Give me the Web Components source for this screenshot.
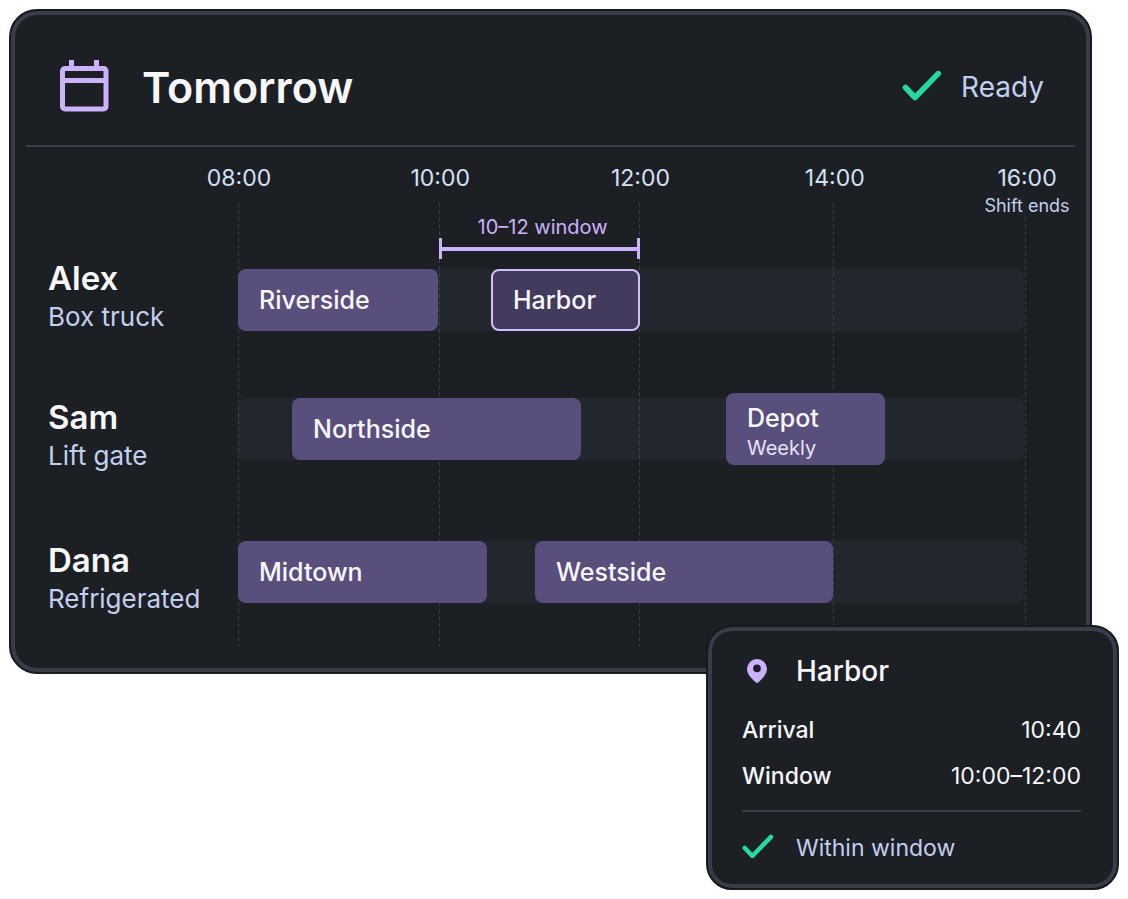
<!DOCTYPE html>
<html lang="en">
<head>
<meta charset="utf-8">
<title>Tomorrow – dispatch schedule</title>
<style>
  :root {
    --surface: #1c2025;
    --edge: #393d47;
    --rim: #171a21;
    --rule: #3b3f4a;
    --text: #f7f7fa;
    --muted: #c3cfee;
    --lilac: #cbb2fb;
    --green: #26d9a0;
    --block: #594f7d;
    --block-soft: #423b5e;
    --hours: 201fr 200fr 194fr 192fr;
  }
  body {
    margin: 0;
    background: #fff;
    color: var(--text);
    font-family: Inter, "Liberation Sans", sans-serif;
  }
</style>
</head>
<body>
<dispatch-page>
  <schedule-board heading="Tomorrow" status="Ready">
    <time-mark slot="axis" time="08:00"></time-mark>
    <time-mark slot="axis" time="10:00"></time-mark>
    <time-mark slot="axis" time="12:00"></time-mark>
    <time-mark slot="axis" time="14:00"></time-mark>
    <time-mark slot="axis" time="16:00" note="Shift ends"></time-mark>

    <driver-row name="Alex" vehicle="Box truck" class="windowed" style="--slots: 200fr 53fr 149fr 384fr">
      <time-window slot="window">10–12 window</time-window>
      <job-block style="grid-column: 1">Riverside</job-block>
      <job-block style="grid-column: 3" selected>Harbor</job-block>
    </driver-row>
    <driver-row name="Sam" vehicle="Lift gate" style="--slots: 54fr 289fr 145fr 159fr 139fr">
      <job-block style="grid-column: 2">Northside</job-block>
      <job-block style="grid-column: 4" note="Weekly">Depot</job-block>
    </driver-row>
    <driver-row name="Dana" vehicle="Refrigerated" style="--slots: 249fr 48fr 298fr 191fr">
      <job-block style="grid-column: 1">Midtown</job-block>
      <job-block style="grid-column: 3">Westside</job-block>
    </driver-row>
  </schedule-board>

  <stop-card slot="detail" heading="Harbor" status="Within window">
    <detail-line label="Arrival">10:40</detail-line>
    <detail-line label="Window">10:00–12:00</detail-line>
  </stop-card>
</dispatch-page>

<script>
const define = (name, render) => customElements.define(name, class extends HTMLElement {
  connectedCallback() {
    if (this.shadowRoot) return;
    this.attachShadow({ mode: "open" }).innerHTML = render(key => this.getAttribute(key) || "");
  }
});

define("dispatch-page", () => `
  <style>
    :host { display: flex; flex-direction: column; padding: 9px; }
    ::slotted(schedule-board) { margin-right: 27px; }
    ::slotted(stop-card) { align-self: flex-end; position: relative; margin-top: -49px; }
  </style>
  <slot></slot>
  <slot name="detail"></slot>`);

define("check-icon", () => `
  <style>
    :host { display: block; flex: none; }
    svg { display: block; width: 100%; height: auto; }
  </style>
  <svg viewBox="0 0 40 34" fill="none" stroke="var(--green)" stroke-width="5.6" stroke-linecap="round" stroke-linejoin="round" aria-hidden="true">
    <path d="M3.5 17.5 13 27.500 36.200 3.600"/>
  </svg>`);

define("schedule-board", at => `
  <style>
    :host {
      display: block;
      box-sizing: border-box;
      padding: 6px 15px 26px;
      border-radius: 28px;
      border: 2px solid var(--rim);
      background: var(--surface);
      box-shadow: inset 0 0 0 4px var(--edge);
    }
    header {
      display: flex;
      align-items: center;
      box-sizing: border-box;
      height: 130px;
      padding: 12px 31px 0 34px;
      border-bottom: 2px solid var(--rule);
    }
    .calendar { flex: none; width: 50px; height: 54px; margin-right: 32px; }
    h1 { margin: 0; flex: 1; font-size: 43px; line-height: 56px; font-weight: 600; }
    check-icon { width: 40px; margin-right: 19px; }
    .status { font-size: 28px; line-height: 36px; color: var(--muted); }
    .chart { position: relative; display: flex; flex-direction: column; }
    .axis { display: grid; grid-template-columns: var(--hours) 0; margin: 17px 49px 0 212px; height: 52px; }
    .lines {
      position: absolute;
      inset: 56px 49px 0 212px;
      display: grid;
      grid-template-columns: var(--hours) 1px;
    }
    .lines i {
      width: 1px;
      background: repeating-linear-gradient(#3a3e48 0 4px, transparent 4px 7px);
    }
    .lines i:last-child { margin-top: 14px; }
    .rows { position: relative; display: grid; gap: 65px; padding: 0 51px 27px 22px; }
  </style>
  <header>
    <svg class="calendar" viewBox="0 0 50 54" fill="none" stroke="var(--lilac)" stroke-width="5" aria-hidden="true">
      <rect x="2.500" y="8.500" width="43.500" height="40.500" rx="2.500"/>
      <path d="M2.500 20.500H46M11.500 8V0M36.500 8V0"/>
    </svg>
    <h1>${at("heading")}</h1>
    <check-icon></check-icon>
    <span class="status">${at("status")}</span>
  </header>
  <div class="chart">
    <div class="lines" aria-hidden="true"><i></i><i></i><i></i><i></i><i></i></div>
    <div class="axis"><slot name="axis"></slot></div>
    <div class="rows"><slot></slot></div>
  </div>`);

define("time-mark", at => `
  <style>
    :host { display: flex; flex-direction: column; align-items: center; width: 2px; white-space: nowrap; color: #d6e0f5; }
    time { font-size: 23px; line-height: 28px; }
    small { font-size: 18px; line-height: 28px; color: var(--muted); }
  </style>
  <time>${at("time")}</time>
  ${at("note") && `<small>${at("note")}</small>`}`);

define("driver-row", at => `
  <style>
    :host { display: grid; grid-template-columns: 190px minmax(0, 1fr); align-items: start; }
    :host(.windowed) { align-items: end; margin-bottom: -4px; }
    :host(.windowed) .lane { padding-bottom: 6px; }
    h2, p { margin: 0; white-space: nowrap; }
    h2 { font-size: 33px; line-height: 38px; font-weight: 600; }
    p { font-size: 26px; line-height: 40px; color: var(--muted); }
    .track {
      display: grid;
      grid-template: 62px / var(--slots);
      align-items: center;
      border-radius: 8px;
      background: #6c749815;
    }
  </style>
  <div><h2>${at("name")}</h2><p>${at("vehicle")}</p></div>
  <div class="lane">
    <slot name="window"></slot>
    <div class="track"><slot></slot></div>
  </div>`);

define("time-window", () => `
  <style>
    :host { display: grid; grid-template-columns: var(--hours); margin-bottom: 10px; }
    div { grid-column: 2; display: grid; justify-items: center; color: var(--lilac); font-size: 20px; line-height: 22px; margin-right: -2px; }
    span { padding-left: 6px; white-space: nowrap; }
    i {
      justify-self: stretch;
      height: 21px;
      box-sizing: border-box;
      border: solid var(--lilac);
      border-width: 0 3px;
      background: linear-gradient(var(--lilac), var(--lilac)) center / 100% 4px no-repeat;
    }
  </style>
  <div><span><slot></slot></span><i></i></div>`);

define("job-block", at => `
  <style>
    :host {
      display: flex;
      flex-direction: column;
      justify-content: center;
      box-sizing: border-box;
      height: 62px;
      padding: 0 21px;
      border-radius: 8px;
      background: var(--block);
      font-size: 25px;
      line-height: 30px;
      font-weight: 500;
      white-space: nowrap;
    }
    :host([note]) { height: 72px; padding-top: 8px; }
    :host([selected]) { border: 2px solid #d3bffb; padding: 0 20px; background: var(--block-soft); }
    small { font-size: 20px; font-weight: 400; line-height: 30px; color: #e6e3fa; }
  </style>
  <slot></slot>
  ${at("note") && `<small>${at("note")}</small>`}`);

define("stop-card", at => `
  <style>
    :host {
      display: block;
      box-sizing: border-box;
      width: 413px;
      max-width: 100%;
      padding: 26px 36px 22px 34px;
      border-radius: 26px;
      border: 2px solid var(--rim);
      background: var(--surface);
      box-shadow: inset 0 0 0 4px var(--edge);
    }
    header, footer { display: grid; grid-template-columns: 30px 1fr; column-gap: 24px; align-items: center; }
    svg { width: 20px; height: 24px; justify-self: center; }
    h2 { margin: 0; font-size: 28px; line-height: 36px; font-weight: 500; }
    dl { margin: 18px 0 0; padding-bottom: 11px; border-bottom: 2px solid var(--rule); }
    footer { padding-top: 18px; font-size: 23px; line-height: 36px; color: var(--muted); }
    check-icon { width: 32px; }
  </style>
  <header>
    <svg viewBox="0 0 20 24" aria-hidden="true">
      <path fill="var(--lilac)" fill-rule="evenodd" d="M10 0A10 10 0 0 0 0 10C0 15 4 19 8.600 23.300Q10 24.600 11.400 23.300C16 19 20 15 20 10A10 10 0 0 0 10 0ZM10 5.600A3.800 3.800 0 1 1 10 13.200 3.800 3.800 0 0 1 10 5.600Z"/>
    </svg>
    <h2>${at("heading")}</h2>
  </header>
  <dl><slot></slot></dl>
  <footer><check-icon></check-icon><span>${at("status")}</span></footer>`);

define("detail-line", at => `
  <style>
    :host { display: flex; justify-content: space-between; font-size: 23px; line-height: 46px; }
    dt { font-weight: 500; }
    dd { margin: 0; }
  </style>
  <dt>${at("label")}</dt>
  <dd><slot></slot></dd>`);
</script>
</body>
</html>
